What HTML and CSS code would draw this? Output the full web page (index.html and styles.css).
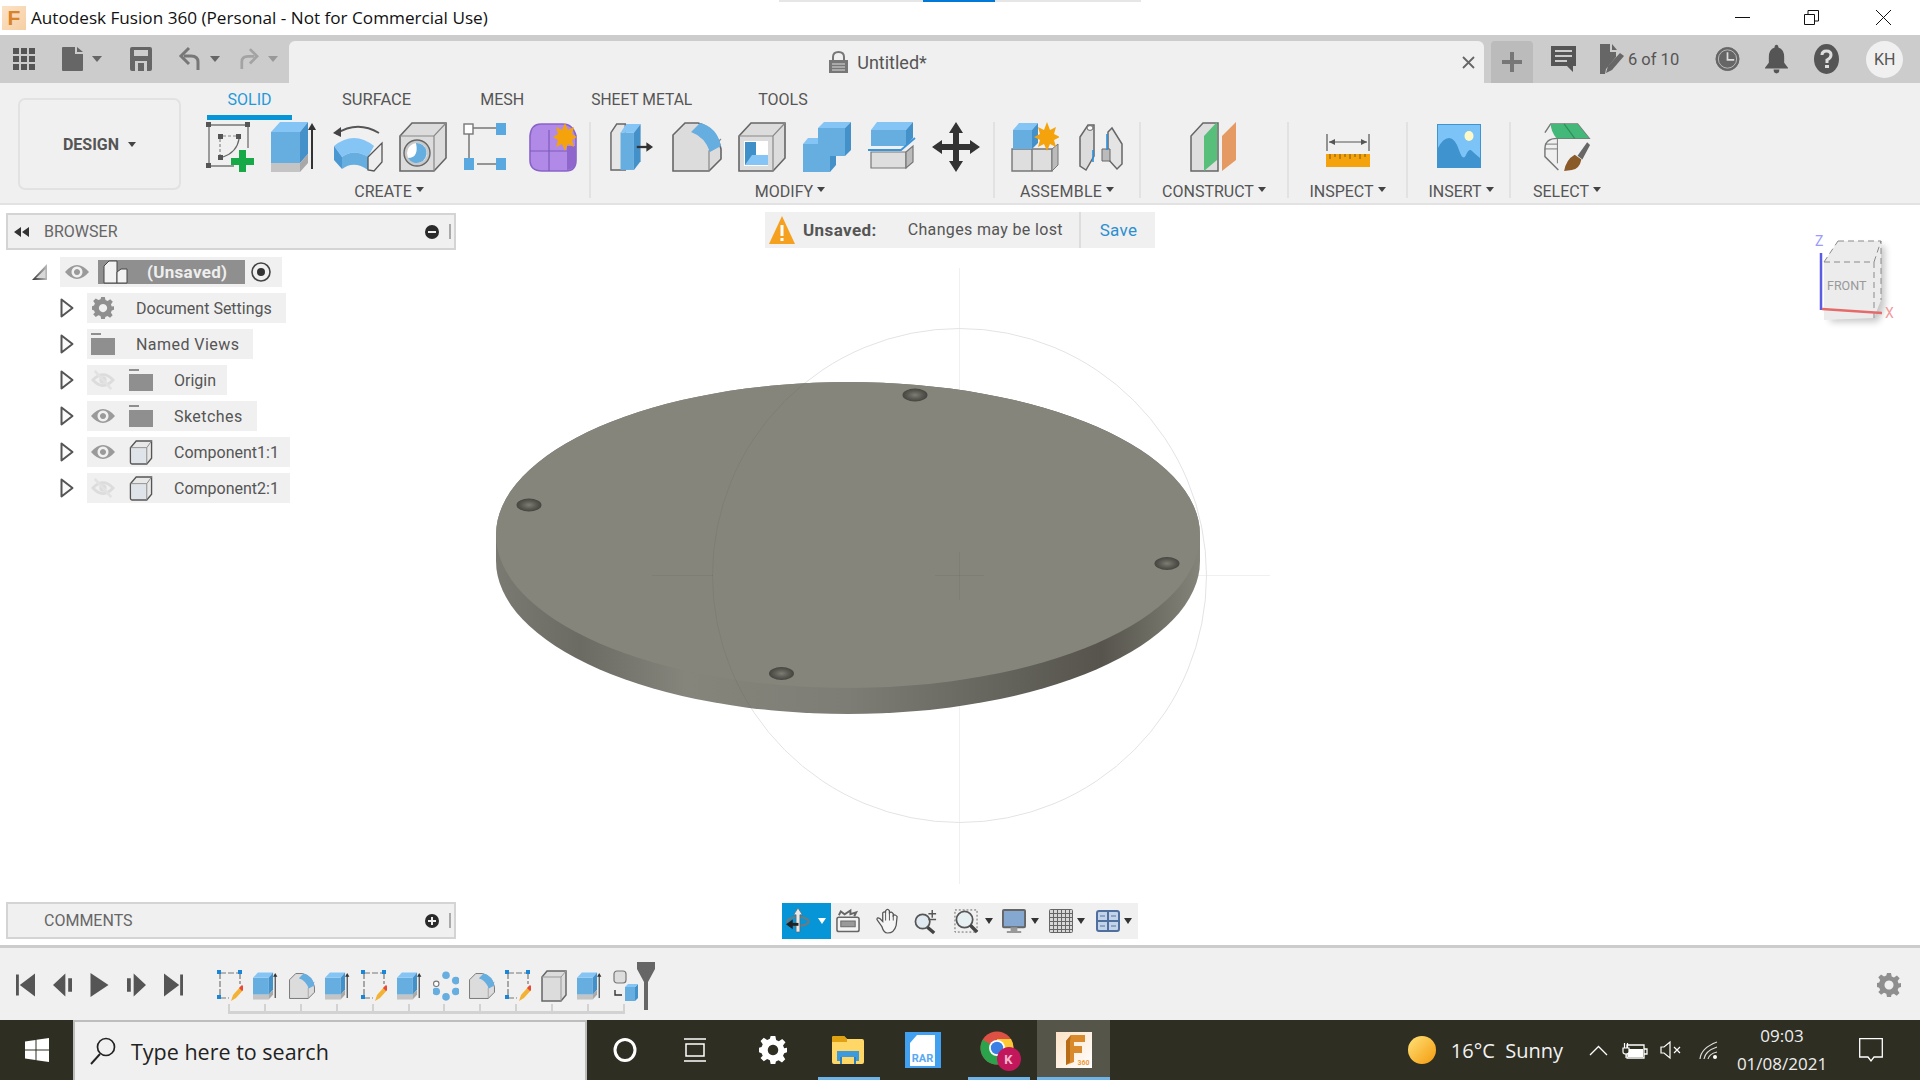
FILE: index.html
```html
<!DOCTYPE html>
<html lang="en">
<head>
<meta charset="utf-8">
<title>Autodesk Fusion 360</title>
<link rel="stylesheet" href="styles.css">
</head>
<body>
<svg class="defs" width="0" height="0" aria-hidden="true">
  <defs>
    <symbol id="i-sketch" viewBox="0 0 48 50">
      <path d="M3 3H42M3 3V44M3 44H28M42 3V26" fill="none" stroke="#777" stroke-width="1.4"/>
      <path d="M0 0h5v5H0zM39 0h5v5h-5zM0 41h5v5H0zM12 12h5v5h-5zM30 12h5v5h-5zM12 33h5v5h-5z" fill="#555"/>
      <path d="M14 17V33M17 14H30" fill="none" stroke="#888" stroke-width="1.2" stroke-dasharray="3 2"/>
      <path d="M33 17Q31 30 17 35" fill="none" stroke="#666" stroke-width="1.3"/>
      <path d="M33 28h7v8h8v7h-8v7h-7v-7h-8v-7h8z" fill="#17a847"/>
    </symbol>
    <symbol id="i-sketch-edit" viewBox="0 0 26 32">
      <path d="M3 3H23M3 3V28M3 28H12M23 3V14" fill="none" stroke="#777" stroke-width="1.2" stroke-dasharray="6 2"/>
      <path d="M0 0h4v4H0zM21 0h4v4h-4zM0 25h4v4H0z" fill="#1c86d6"/>
      <path d="M14 31l2-6 8-9 3 3-8 9z" fill="#f2b233"/>
      <path d="M22 18l3-3 3 3-3 3z" fill="#e8473c"/>
    </symbol>
    <symbol id="i-extrude" viewBox="0 0 48 50">
      <path d="M0 10H29V41H0z" fill="#66ade0"/>
      <path d="M0 10L9 0H37L29 10z" fill="#85c5f5"/>
      <path d="M29 10L37 0V32L29 41z" fill="#4490c8"/>
      <path d="M0 41H29V50H0z" fill="#c4c4c4"/>
      <path d="M29 41L37 32V41L29 50z" fill="#a8a8a8"/>
      <path d="M41 47V6" stroke="#333" stroke-width="2"/>
      <path d="M41 1L37 8H45z" fill="#333"/>
    </symbol>
    <symbol id="i-revolve" viewBox="0 0 50 50">
      <path d="M3 12Q24 -2 46 11" fill="none" stroke="#555" stroke-width="1.8"/>
      <path d="M0 11L8 5L8 15z" fill="#444"/>
      <path d="M1 24Q21 8 41 24L35 35Q21 26 9 35z" fill="#85c5f5"/>
      <path d="M1 24L9 35V47L1 38z" fill="#4a97d2"/>
      <path d="M9 35Q21 26 35 35V48Q21 38 9 47z" fill="#66ade0"/>
      <path d="M35 35L49 21V40L41 49L35 48z" fill="#eee" stroke="#555" stroke-width="1.3"/>
    </symbol>
    <symbol id="i-hole" viewBox="0 0 48 50">
      <path d="M1 14L13 1H47V36L35 49H1z" fill="#dcdcdc" stroke="#666" stroke-width="1.6"/>
      <path d="M1 14H35L47 1M35 14V49" fill="none" stroke="#888" stroke-width="1.2"/>
      <circle cx="18" cy="31" r="13" fill="#c9c9c9" stroke="#666" stroke-width="1.4"/>
      <circle cx="18" cy="31" r="10" fill="#fff"/>
      <path d="M17 21A10 10 0 1 1 9 36Q20 36 17 21z" fill="#66ade0"/>
    </symbol>
    <symbol id="i-pattern" viewBox="0 0 44 50">
      <path d="M9 6H34M6 12V36M14 42H34" stroke="#777" stroke-width="1.5"/>
      <rect x="1" y="2" width="9" height="10" fill="#fff" stroke="#777" stroke-width="1.4"/>
      <rect x="33" y="1" width="10" height="12" fill="#5aa8e0"/>
      <rect x="1" y="36" width="10" height="12" fill="#5aa8e0"/>
      <rect x="33" y="36" width="10" height="12" fill="#5aa8e0"/>
    </symbol>
    <symbol id="i-form" viewBox="0 0 48 50">
      <path d="M12 2H34Q44 2 47 14V38Q47 49 37 49H13Q1 49 1 38V14Q2 2 12 2z" fill="#b18ae8" stroke="#8a63c9" stroke-width="1.6"/>
      <path d="M1 29H40M20 8V49" stroke="#7e5bb8" stroke-width="1.2" fill="none"/>
      <path d="M38 24H47V38Q47 47 38 48z" fill="#8e66cc"/>
      <path d="M36 0l3 7 6-3-2 7 5 3-5 3 2 7-6-3-3 7-3-7-6 3 2-7-5-3 5-3-2-7 6 3z" fill="#f5a30c" transform="translate(0 1)"/>
    </symbol>
    <symbol id="i-press" viewBox="0 0 46 50">
      <path d="M1 49V10L7 1H16V49z" fill="#e6e6e6" stroke="#666" stroke-width="1.5"/>
      <path d="M11 10H25V49H11z" fill="#66ade0"/>
      <path d="M11 10L17 1H32L25 10z" fill="#85c5f5"/>
      <path d="M25 10L32 1V40L25 49z" fill="#4490c8"/>
      <path d="M28 25H40" stroke="#333" stroke-width="2.4"/>
      <path d="M38 20L45 25L38 30z" fill="#333"/>
    </symbol>
    <symbol id="i-fillet" viewBox="0 0 50 50">
      <path d="M1 49V13L13 1H26Q44 6 49 27V37L37 49z" fill="#dcdcdc" stroke="#666" stroke-width="1.6"/>
      <path d="M37 49V29L49 17" fill="none" stroke="#888" stroke-width="1.2"/>
      <path d="M19 10L28 1Q45 5 49 24L38 30Q33 15 19 10z" fill="#66ade0"/>
    </symbol>
    <symbol id="i-shell" viewBox="0 0 48 50">
      <path d="M1 14L13 1H47V36L35 49H1z" fill="#dcdcdc" stroke="#666" stroke-width="1.6"/>
      <path d="M1 14H35L47 1M35 14V49" fill="none" stroke="#888" stroke-width="1.2"/>
      <rect x="6" y="19" width="24" height="25" fill="#fff"/>
      <path d="M7 20H18V33H30V43H7z" fill="#85c5f5"/>
      <path d="M7 20H18V33H14L7 43z" fill="#3f8fc9"/>
    </symbol>
    <symbol id="i-combine" viewBox="0 0 48 50">
      <path d="M15 6L21 0H48L42 6z" fill="#85c5f5"/>
      <path d="M15 6H42V34H15z" fill="#66ade0"/>
      <path d="M42 6L48 0V28L42 34z" fill="#4490c8"/>
      <path d="M0 22H27V50H0z" fill="#66ade0"/>
      <path d="M0 22L5 16H15V22z" fill="#85c5f5"/>
      <path d="M27 34H33V43L27 50z" fill="#4490c8"/>
    </symbol>
    <symbol id="i-offset" viewBox="0 0 48 50">
      <path d="M3 8L9 0H45L38 8z" fill="#85c5f5"/>
      <path d="M3 8H38V24H3z" fill="#66ade0"/>
      <path d="M38 8L45 0V16L38 24z" fill="#4490c8"/>
      <path d="M0 28H33L47 16" fill="none" stroke="#3a94dc" stroke-width="1.800"/>
      <path d="M3 30H38V46H3z" fill="#dedede" stroke="#777" stroke-width="1.200"/>
      <path d="M38 30L45 24V40L38 46z" fill="#bbb" stroke="#777" stroke-width="1.200"/>
    </symbol>
    <symbol id="i-move" viewBox="0 0 48 50">
      <path d="M24 0L31 11H27V22H38V18L48 25L38 32V28H27V39H31L24 50L17 39H21V28H10V32L0 25L10 18V22H21V11H17z" fill="#333"/>
    </symbol>
    <symbol id="i-assemble" viewBox="0 0 48 50">
      <path d="M1 27H21V49H1zM21 27H41V49H21z" fill="#dedede" stroke="#777" stroke-width="1.4"/>
      <path d="M41 27L47 22V43L41 49z" fill="#bbb" stroke="#777" stroke-width="1"/>
      <path d="M2 8H21V27H2z" fill="#66ade0"/>
      <path d="M2 8L8 1H27L21 8z" fill="#85c5f5"/>
      <path d="M21 8L27 1V21L21 27z" fill="#4490c8"/>
      <path d="M36 0l3 8 6-3-2 7 6 3-6 3 2 7-6-3-3 7-3-7-6 3 2-7-6-3 6-3-2-7 6 3z" fill="#f5a30c"/>
    </symbol>
    <symbol id="i-joint" viewBox="0 0 44 46">
      <path d="M1 42V13L9 1H15V32L7 46z" fill="#dcdcdc" stroke="#666" stroke-width="1.5"/>
      <ellipse cx="11" cy="4" rx="3" ry="2.4" fill="#fff" stroke="#666"/>
      <path d="M29 24V8L33 4L43 20V40L38 45L29 35z" fill="#e4e4e4" stroke="#666" stroke-width="1.5"/>
      <path d="M23 25H31V37H23z" fill="#bbb" stroke="#666"/>
      <path d="M14 26V38M28 10V26" stroke="#2d8fdc" stroke-width="1.6"/>
    </symbol>
    <symbol id="i-construct" viewBox="0 0 48 50">
      <path d="M1 49V14L13 1H28V49z" fill="#dedede" stroke="#666" stroke-width="1.5"/>
      <path d="M14 49V14L27 0V38L14 49z" fill="#58bf7a"/>
      <path d="M32 49V14L46 0V38L32 49z" fill="#e59a63"/>
    </symbol>
    <symbol id="i-inspect" viewBox="0 0 44 34">
      <path d="M1 1V18M43 1V18M3 9H41" stroke="#555" stroke-width="1.2" fill="none"/>
      <path d="M3 9L9 6V12zM41 9L35 6V12z" fill="#555"/>
      <rect y="21" width="44" height="13" fill="#f5a30c"/>
      <path d="M4 21v5M9 21v3M14 21v5M19 21v3M24 21v5M29 21v3M34 21v5M39 21v3" stroke="#7a5a10" stroke-width="1"/>
    </symbol>
    <symbol id="i-insert" viewBox="0 0 44 44">
      <rect x=".5" y=".5" width="43" height="43" fill="#7cc4f8" stroke="#3f93cf"/>
      <ellipse cx="32" cy="12" rx="4.5" ry="5" fill="#fff9c8"/>
      <path d="M1 43V24Q6 14 12 14T22 26T29 31T35 27T43 34V43z" fill="#3f93cf"/>
    </symbol>
    <symbol id="i-select" viewBox="0 0 50 50">
      <path d="M2 10L8 1H36L48 16H15Q2 16 2 27V35L16 49" fill="none" stroke="#777" stroke-width="1.5"/>
      <path d="M8 1H36L48 16H14Q8 8 8 1z" fill="#44b878"/>
      <path d="M22 1L33 16" stroke="#2f8f58" stroke-width="1.2"/>
      <path d="M15 16V42M2 27H15M2 22H15" stroke="#777" stroke-width="1" fill="none"/>
      <path d="M36 34L46 20L49 23L41 38z" fill="#666"/>
      <path d="M22 50Q24 38 33 33L40 38Q38 48 30 49z" fill="#8a5a28"/>
    </symbol>
    <symbol id="i-gear" viewBox="0 0 24 24">
      <path fill-rule="evenodd" d="M10 0h4l.7 3.4 2.3 1 2.9-1.9 2.8 2.8L20.600 8.100l1 2.300L24 10v4l-2.400.7-1 2.300 1.900 2.900-2.800 2.800-2.900-1.900-2.300 1L14 24h-4l-.7-3.200-2.300-1-2.900 1.900-2.800-2.800L3.200 17l-1-2.300L0 14v-4l2.200-.6 1-2.300L1.300 4.300 4.100 1.500 7 3.400l2.300-1zM12 7.500a4.500 4.500 0 1 0 .001 0z"/>
    </symbol>
    <symbol id="i-folder" viewBox="0 0 24 22">
      <path d="M0 0H10V2H0zM0 5H24V22H0z" fill="#8f8f8f"/>
    </symbol>
    <symbol id="i-eye" viewBox="0 0 24 18">
      <path fill-rule="evenodd" d="M0 9Q12 -5 24 9Q12 23 0 9zM12 3.500a5.500 5.500 0 1 0 .001 0zM12 6a3 3 0 1 1-.001 0z" fill="#9a9a9a"/>
    </symbol>
    <symbol id="i-eye-off" viewBox="0 0 24 24">
      <path d="M1 12Q12 0 23 12Q12 24 1 12z" fill="none" stroke="#dcdcdc" stroke-width="3"/>
      <circle cx="12" cy="12" r="4" fill="#dcdcdc"/>
      <path d="M3 2L21 22" stroke="#e2e2e2" stroke-width="3"/>
    </symbol>
    <symbol id="i-comp" viewBox="0 0 24 26">
      <path d="M1 8L7 1H23V19L18 25H3Q1 25 1 23z" fill="#e8e8e8" stroke="#555" stroke-width="1.4"/>
      <path d="M1 8H18L23 1M18 8V25" fill="none" stroke="#888"/>
      <path d="M2 9H17V24H3z" fill="#dfe4ea"/>
    </symbol>
    <symbol id="i-twist" viewBox="0 0 14 20">
      <path d="M1.500 1.500L12.500 10L1.500 18.500z" fill="#fafafa" stroke="#555" stroke-width="2" stroke-linejoin="round"/>
    </symbol>
    <symbol id="i-tlpattern" viewBox="0 0 24 26">
      <circle cx="3" cy="11" r="2.500" fill="#fff" stroke="#777"/>
      <circle cx="12" cy="3" r="3.500" fill="#66ade0"/>
      <circle cx="21" cy="8" r="3.500" fill="#66ade0"/>
      <circle cx="21" cy="18" r="3.500" fill="#66ade0"/>
      <circle cx="12" cy="23" r="3.500" fill="#66ade0"/>
      <circle cx="3" cy="18" r="3.500" fill="#66ade0"/>
    </symbol>
    <symbol id="i-tlbox" viewBox="0 0 26 32">
      <path d="M1 7L6 1H25V25L20 31H1z" fill="#dcdcdc" stroke="#666" stroke-width="1.5"/>
      <path d="M1 7H20L25 1M20 7V31" fill="none" stroke="#999"/>
    </symbol>
    <symbol id="i-tlmove" viewBox="0 0 26 32">
      <rect x="1" y="1" width="12" height="12" rx="3" fill="#ddd" stroke="#777" stroke-width="1.2"/>
      <path d="M2 20V25H9" fill="none" stroke="#333" stroke-width="1.4"/>
      <path d="M12 17H22V31H12z" fill="#66ade0"/>
      <path d="M22 17L25 14V28L22 31z" fill="#4490c8"/>
      <path d="M12 17L15 14H25L22 17z" fill="#85c5f5"/>
    </symbol>
  </defs>
</svg>

<header class="titlebar">
  <span class="app-logo"><span class="app-logo-f">F</span></span>
  <span class="app-title">Autodesk Fusion 360 (Personal - Not for Commercial Use)</span>
  <span class="winbtns">
    <svg class="winbtn" viewBox="0 0 15 15"><path d="M0 7.500H15" stroke="#111" stroke-width="1"/></svg>
    <svg class="winbtn" viewBox="0 0 15 15"><path d="M.5 4.500H10.500V14.500H.5zM4 4.500V.5H14.500V11H10.500" fill="none" stroke="#111"/></svg>
    <svg class="winbtn winbtn-close" viewBox="0 0 15 15"><path d="M0 0L15 15M15 0L0 15" stroke="#111"/></svg>
  </span>
</header>
<div class="progress"><span class="progress-fill"></span></div>

<div class="tabbar">
  <div class="qat">
    <svg class="q-waffle" viewBox="0 0 22 22"><path fill="#555" d="M0 0h6v6H0zM8 0h6v6H8zM16 0h6v6h-6zM0 8h6v6H0zM8 8h6v6H8zM16 8h6v6h-6zM0 16h6v6H0zM8 16h6v6H8zM16 16h6v6h-6z"/></svg>
    <svg class="q-file" viewBox="0 0 21 24"><path fill="#666" d="M0 1Q0 0 1 0H13V7H21V23Q21 24 20 24H1Q0 24 0 23zM15 0L21 5H15z"/></svg>
    <span class="caret caret-file"></span>
    <svg class="q-save" viewBox="0 0 22 24"><path fill-rule="evenodd" fill="#666" d="M0 2Q0 0 2 0H20Q22 0 22 2V22Q22 24 20 24H2Q0 24 0 22zM4 3V9H18V3zM5 24H17V14H5zM8 16H14V24H8z"/></svg>
    <svg class="q-undo" viewBox="0 0 20 24"><path d="M18 23V15Q18 9 11 9H4" fill="none" stroke="#777" stroke-width="3"/><path d="M9 1L1 9L9 17" fill="none" stroke="#777" stroke-width="3"/></svg>
    <span class="caret caret-undo"></span>
    <svg class="q-redo" viewBox="0 0 20 24"><path d="M2 23V15Q2 9 9 9H16" fill="none" stroke="#a3a3a3" stroke-width="3"/><path d="M11 1L19 9L11 17" fill="none" stroke="#a3a3a3" stroke-width="3"/></svg>
    <span class="caret caret-redo"></span>
  </div>
  <div class="doctab">
    <div class="doctab-title">
      <svg class="lock" viewBox="0 0 19 22"><path d="M4 9V6Q4 1 9.500 1T15 6V9" fill="none" stroke="#777" stroke-width="2"/><path fill="#777" d="M0 9H19V22H0z"/><path d="M3 13H16M3 16H16M3 19H16" stroke="#ddd"/></svg>
      <span class="doctab-name">Untitled*</span>
    </div>
    <svg class="doctab-x" viewBox="0 0 13 13"><path d="M1 1L12 12M12 1L1 12" stroke="#666" stroke-width="1.8"/></svg>
  </div>
  <div class="newtab"><svg class="newtab-plus" viewBox="0 0 20 20"><path d="M10 0V20M0 10H20" stroke="#777" stroke-width="4"/></svg></div>
  <div class="qat-right">
    <svg class="q-comment" viewBox="0 0 25 26"><path fill="#555" d="M0 0H25V20H22V26L16 20H0z"/><path d="M4 5H21M4 10H21M4 15H16" stroke="#ccc" stroke-width="1.8"/></svg>
    <svg class="q-doc" viewBox="0 0 24 30"><path fill="#666" d="M0 0H10V8H16V13L6 25L5 30H0zM12 0L17 6H12z"/><path d="M6 29L8 22L20 9L24 12L12 26z" fill="#666"/></svg>
    <span class="doc-count">6 of 10</span>
    <svg class="q-clock" viewBox="0 0 26 26"><circle cx="13" cy="13" r="12" fill="#666" stroke="#666"/><circle cx="13" cy="13" r="9.500" fill="#666" stroke="#bbb"/><path d="M13 6V14H20" fill="none" stroke="#ddd" stroke-width="1.800"/></svg>
    <svg class="q-bell" viewBox="0 0 24 30"><path fill="#555" d="M12 0Q14 0 14 3Q20 5 20 13V19L24 24V25H0V24L4 19V13Q4 5 10 3Q10 0 12 0z"/><path fill="#555" d="M9 26H15Q15 30 12 30T9 26z"/></svg>
    <svg class="q-help" viewBox="0 0 25 30"><ellipse cx="12.500" cy="15" rx="12.500" ry="15" fill="#555"/><path d="M8 11Q8 7 12.500 7T17 11Q17 14 13 16V19" fill="none" stroke="#ddd" stroke-width="3"/><path d="M11 21h4v3h-4z" fill="#ddd"/></svg>
    <span class="avatar">KH</span>
  </div>
</div>

<section class="ribbon">
  <div class="workspace"><span class="workspace-name">DESIGN</span><span class="caret caret-ws"></span></div>
  <div class="rib-main">
    <nav class="rib-tabs">
      <span class="rib-tab rib-tab-solid">SOLID</span>
      <span class="rib-tab rib-tab-surface">SURFACE</span>
      <span class="rib-tab rib-tab-mesh">MESH</span>
      <span class="rib-tab rib-tab-sheet">SHEET METAL</span>
      <span class="rib-tab rib-tab-tools">TOOLS</span>
    </nav>
    <div class="rib-groups">
      <div class="group g-create">
        <div class="g-icons">
          <span class="cell"><svg class="ic"><use href="#i-sketch"/></svg></span>
          <span class="cell"><svg class="ic"><use href="#i-extrude"/></svg></span>
          <span class="cell"><svg class="ic ic-w nudge-4"><use href="#i-revolve"/></svg></span>
          <span class="cell"><svg class="ic nudge-4"><use href="#i-hole"/></svg></span>
          <span class="cell"><svg class="ic ic-n nudge-8"><use href="#i-pattern"/></svg></span>
          <span class="cell"><svg class="ic nudge-4"><use href="#i-form"/></svg></span>
        </div>
        <div class="g-label g-label-create">CREATE<span class="caret caret-lbl"></span></div>
      </div>
      <div class="group g-modify">
        <div class="g-icons">
          <span class="cell"><svg class="ic ic-n"><use href="#i-press"/></svg></span>
          <span class="cell"><svg class="ic ic-w"><use href="#i-fillet"/></svg></span>
          <span class="cell"><svg class="ic"><use href="#i-shell"/></svg></span>
          <span class="cell"><svg class="ic"><use href="#i-combine"/></svg></span>
          <span class="cell"><svg class="ic"><use href="#i-offset"/></svg></span>
          <span class="cell"><svg class="ic nudge-2"><use href="#i-move"/></svg></span>
        </div>
        <div class="g-label g-label-modify">MODIFY<span class="caret caret-lbl"></span></div>
      </div>
      <div class="group g-assemble">
        <div class="g-icons">
          <span class="cell"><svg class="ic nudge-2"><use href="#i-assemble"/></svg></span>
          <span class="cell"><svg class="ic ic-n"><use href="#i-joint"/></svg></span>
        </div>
        <div class="g-label g-label-assemble">ASSEMBLE<span class="caret caret-lbl"></span></div>
      </div>
      <div class="group g-construct">
        <div class="g-icons g-icons-center"><svg class="ic"><use href="#i-construct"/></svg></div>
        <div class="g-label">CONSTRUCT<span class="caret caret-lbl"></span></div>
      </div>
      <div class="group g-inspect">
        <div class="g-icons g-icons-center"><svg class="ic-ruler"><use href="#i-inspect"/></svg></div>
        <div class="g-label">INSPECT<span class="caret caret-lbl"></span></div>
      </div>
      <div class="group g-insert">
        <div class="g-icons g-icons-center"><svg class="ic-picture"><use href="#i-insert"/></svg></div>
        <div class="g-label g-label-insert">INSERT<span class="caret caret-lbl"></span></div>
      </div>
      <div class="group g-select">
        <div class="g-icons g-icons-center"><svg class="ic"><use href="#i-select"/></svg></div>
        <div class="g-label">SELECT<span class="caret caret-lbl"></span></div>
      </div>
    </div>
  </div>
</section>

<main class="canvas">
  <svg class="scene" viewBox="0 205 1920 740" width="1920" height="740">
    <defs>
      <linearGradient id="side" x1="0" x2="1" y1="0" y2="0">
        <stop offset="0" stop-color="#7a7a72"/>
        <stop offset=".12" stop-color="#6b6b64"/>
        <stop offset=".27" stop-color="#85857c"/>
        <stop offset=".5" stop-color="#7d7d75"/>
        <stop offset=".72" stop-color="#64635c"/>
        <stop offset=".86" stop-color="#56544c"/>
        <stop offset="1" stop-color="#84847a"/>
      </linearGradient>
      <radialGradient id="holeg" cx=".5" cy=".5" r=".5">
        <stop offset="0" stop-color="#7d7d75"/>
        <stop offset=".55" stop-color="#5c5c55"/>
        <stop offset="1" stop-color="#45453f"/>
      </radialGradient>
      <filter id="soft" x="-30%" y="-30%" width="160%" height="160%"><feGaussianBlur stdDeviation="3.500"/></filter>
    </defs>
    <g fill="none" stroke="#f0f0f0" stroke-width="1">
      <ellipse cx="959.500" cy="575.500" rx="247" ry="247"/>
      <path d="M959.500 268V884M652 575.500H1270"/>
    </g>
    <path d="M496 535A352 153 0 0 1 1200 535V561A352 153 0 0 1 496 561z" fill="url(#side)"/>
    <ellipse cx="848" cy="535" rx="352" ry="153" fill="#85857c"/>
    <g fill="url(#holeg)">
      <ellipse cx="915" cy="395" rx="12.500" ry="6.500"/>
      <ellipse cx="529" cy="505" rx="12.500" ry="6.500"/>
      <ellipse cx="1167" cy="563.500" rx="12.500" ry="6.500"/>
      <ellipse cx="781.500" cy="673.500" rx="12.500" ry="6.500"/>
    </g>
    <g fill="none" stroke="#000" stroke-opacity=".05" stroke-width="1">
      <ellipse cx="959.500" cy="575.500" rx="247" ry="247"/>
      <path d="M652 575.500H713M935 575.500H984M959.500 552V600"/>
    </g>
    <g class="cube">
      <path d="M1826 319L1826 270L1840 243H1881V303L1874 319z" fill="#000" opacity=".22" filter="url(#soft)" transform="translate(4 3)"/>
      <path d="M1824 320V262L1838 241H1881V300L1874 318z" fill="#ececec"/>
      <path d="M1824 262H1874L1881 241M1874 262V318" fill="none" stroke="#8a8a8a" stroke-dasharray="6 4"/>
      <path d="M1838 241H1881V300M1824 262L1838 241" fill="none" stroke="#8a8a8a" stroke-dasharray="6 4"/>
      <path d="M1821 253V310" stroke="#5b5be6" stroke-width="2.500"/>
      <path d="M1822 309L1882 313" stroke="#e56a6a" stroke-width="2.500"/>
      <text x="1827" y="290" class="cube-label">FRONT</text>
      <text x="1815" y="246" class="cube-z">Z</text>
      <text x="1885" y="318" class="cube-x">X</text>
    </g>
  </svg>

  <aside class="side">
    <div class="panel">
      <svg class="panel-back" viewBox="0 0 15 10"><path fill="#333" d="M7 0V10L0 5zM15 0V10L8 5z"/></svg>
      <span class="panel-title">BROWSER</span>
      <svg class="panel-btn" viewBox="0 0 14 14"><circle cx="7" cy="7" r="7" fill="#2a2a2a"/><path d="M3 7H11" stroke="#eee" stroke-width="2"/></svg>
      <span class="panel-grip"></span>
    </div>
    <ul class="tree">
      <li class="row row-root">
        <svg class="twist-open" viewBox="0 0 17 18"><defs><linearGradient id="tw" x1="0" x2="1" y1="0" y2="0"><stop offset="0" stop-color="#333"/><stop offset="1" stop-color="#bbb"/></linearGradient></defs><path d="M16 1V17H1z" fill="url(#tw)"/><path d="M14.500 6V15H5z" fill="#d8d8d8"/></svg>
        <div class="row-body row-body-root">
          <svg class="row-icon"><use href="#i-eye"/></svg>
          <div class="root-sel">
            <svg class="root-comp" viewBox="0 0 24 24"><path d="M1 23V6L6 1H14V23z" fill="#f2f2f2" stroke="#444"/><path d="M14 23V12L18 9H24V23z" fill="#f2f2f2" stroke="#444"/></svg>
            <span class="root-name">(Unsaved)</span>
          </div>
          <svg class="root-target" viewBox="0 0 20 20"><circle cx="10" cy="10" r="9" fill="none" stroke="#444" stroke-width="1.6"/><circle cx="10" cy="10" r="4" fill="#333"/></svg>
        </div>
      </li>
      <li class="row">
        <svg class="twist"><use href="#i-twist"/></svg>
        <div class="row-body">
          <svg class="row-icon gear-tree"><use href="#i-gear"/></svg>
          <span class="row-text">Document Settings</span>
        </div>
      </li>
      <li class="row">
        <svg class="twist"><use href="#i-twist"/></svg>
        <div class="row-body">
          <svg class="row-icon"><use href="#i-folder"/></svg>
          <span class="row-text row-text-wide">Named Views</span>
        </div>
      </li>
      <li class="row">
        <svg class="twist"><use href="#i-twist"/></svg>
        <div class="row-body row-body-two">
          <svg class="row-icon"><use href="#i-eye-off"/></svg>
          <svg class="row-icon"><use href="#i-folder"/></svg>
          <span class="row-text">Origin</span>
        </div>
      </li>
      <li class="row">
        <svg class="twist"><use href="#i-twist"/></svg>
        <div class="row-body">
          <svg class="row-icon"><use href="#i-eye"/></svg>
          <svg class="row-icon"><use href="#i-folder"/></svg>
          <span class="row-text row-text-wide">Sketches</span>
        </div>
      </li>
      <li class="row">
        <svg class="twist"><use href="#i-twist"/></svg>
        <div class="row-body row-body-two">
          <svg class="row-icon"><use href="#i-eye"/></svg>
          <svg class="row-icon row-comp"><use href="#i-comp"/></svg>
          <span class="row-text">Component1:1</span>
        </div>
      </li>
      <li class="row">
        <svg class="twist"><use href="#i-twist"/></svg>
        <div class="row-body row-body-two">
          <svg class="row-icon"><use href="#i-eye-off"/></svg>
          <svg class="row-icon row-comp"><use href="#i-comp"/></svg>
          <span class="row-text">Component2:1</span>
        </div>
      </li>
    </ul>
  </aside>

  <div class="unsaved">
    <svg class="warn" viewBox="0 0 26 28"><path d="M13 0L26 28H0z" fill="#f5a11f"/><path d="M11.500 9H14.500V20H11.500zM11.500 22H14.500V25H11.500z" fill="#fff"/></svg>
    <strong class="unsaved-key">Unsaved:</strong>
    <span class="unsaved-msg">Changes may be lost</span>
    <span class="unsaved-save">Save</span>
  </div>

  <div class="panel panel-comments">
    <span class="panel-title panel-title-comments">COMMENTS</span>
    <svg class="panel-btn" viewBox="0 0 14 14"><circle cx="7" cy="7" r="7" fill="#2a2a2a"/><path d="M3 7H11M7 3V11" stroke="#eee" stroke-width="2"/></svg>
    <span class="panel-grip"></span>
  </div>

  <div class="navbar">
    <div class="nav-orbit">
      <svg class="nav-ic" viewBox="0 0 25 27"><ellipse cx="12.500" cy="14" rx="11" ry="4.500" fill="none" stroke="#777" stroke-width="2"/><path d="M12.500 0L17 7H14.500V25H10.500V7H8z" fill="#e8e8e8" stroke="#666" stroke-width=".7"/><path d="M0 17L7 12V22z" fill="#222"/><path d="M5 15.500H13V18.500H5z" fill="#222"/></svg>
      <span class="caret caret-white"></span>
    </div>
    <svg class="nav-ic" viewBox="0 0 25 24"><path d="M3 6L5 2L9 5L15 1L15 5L21 3L19 7" fill="none" stroke="#666" stroke-width="2"/><rect x="1" y="8" width="23" height="15" rx="2" fill="#f3f3f3" stroke="#666" stroke-width="1.600"/><rect x="5" y="12" width="15" height="6" fill="#999" stroke="#666"/></svg>
    <svg class="nav-ic nav-hand" viewBox="0 0 25 27"><path d="M6 19L1 12Q1 9 4 11L7 14V5Q9 3 10 5V3Q12 0 14 3V5Q16 3 18 6V8Q20 6 22 9L21 18Q19 26 12 26Q8 26 6 19z" fill="#f5f5f5" stroke="#555" stroke-width="1.300"/><path d="M10 5V13M14 3V13M18 7V13" stroke="#555"/></svg>
    <svg class="nav-ic" viewBox="0 0 25 25"><circle cx="9" cy="13" r="7.500" fill="#dfe9ef" stroke="#555" stroke-width="1.800"/><path d="M14 19L21 25" stroke="#444" stroke-width="3.600"/><path d="M19 1V9M15 5H23M15 11H23" stroke="#555" stroke-width="1.500"/></svg>
    <div class="nav-item nav-zw">
      <svg class="nav-ic" viewBox="0 0 25 25"><path d="M1 1H24V24H1z" fill="none" stroke="#666" stroke-dasharray="2 2"/><circle cx="11" cy="11" r="8.500" fill="#e6eff2" stroke="#555" stroke-width="1.800"/><path d="M17 17L24 24" stroke="#444" stroke-width="3.600"/></svg>
      <span class="caret caret-nav"></span>
    </div>
    <div class="nav-item nav-disp">
      <svg class="nav-ic" viewBox="0 0 25 25"><rect x="1" y="1" width="23" height="18" rx="1" fill="#85a8d0" stroke="#666" stroke-width="2"/><path d="M9 19H16V23H20V25H5V23H9z" fill="#999"/></svg>
      <span class="caret caret-nav"></span>
    </div>
    <div class="nav-item nav-grid">
      <svg class="nav-ic" viewBox="0 0 24 24"><rect x=".5" y=".5" width="23" height="23" rx="1" fill="#d8d8d8" stroke="#666"/><path d="M4.500 0V24M8.500 0V24M12.500 0V24M16.500 0V24M20.500 0V24M0 4.500H24M0 8.500H24M0 12.500H24M0 16.500H24M0 20.500H24" stroke="#666"/></svg>
      <span class="caret caret-nav"></span>
    </div>
    <div class="nav-item nav-views">
      <svg class="nav-ic" viewBox="0 0 24 22"><rect x="1" y="1" width="22" height="20" rx="2" fill="#c3d3e8" stroke="#4f6f9f" stroke-width="2"/><path d="M12 1V21M1 11H23" stroke="#4f6f9f" stroke-width="2"/><path d="M4 5h5v2H4zM15 5h5v2h-5zM4 15h5v2H4zM15 15h5v2h-5z" fill="#8aa4c8"/></svg>
      <span class="caret caret-nav"></span>
    </div>
  </div>
</main>

<section class="timeline">
  <div class="tl-controls">
    <svg class="tl-ctl" viewBox="0 0 20 24"><path d="M0 1h3v22H0zM20 0V24L4 12z" fill="#555"/></svg>
    <svg class="tl-ctl" viewBox="0 0 20 24"><path d="M13 0V24L0 12zM16 5h4v14h-4z" fill="#555"/></svg>
    <svg class="tl-ctl" viewBox="0 0 18 24"><path d="M0 0L18 12L0 24z" fill="#555"/></svg>
    <svg class="tl-ctl" viewBox="0 0 20 24"><path d="M7 0V24L20 12zM0 5h4v14H0z" fill="#555"/></svg>
    <svg class="tl-ctl" viewBox="0 0 20 24"><path d="M0 0V24L16 12zM17 1h3v22h-3z" fill="#555"/></svg>
  </div>
  <div class="tl-track">
    <div class="tl-items">
      <svg class="tl-i"><use href="#i-sketch-edit"/></svg>
      <svg class="tl-i"><use href="#i-extrude"/></svg>
      <svg class="tl-i"><use href="#i-fillet"/></svg>
      <svg class="tl-i"><use href="#i-extrude"/></svg>
      <svg class="tl-i"><use href="#i-sketch-edit"/></svg>
      <svg class="tl-i"><use href="#i-extrude"/></svg>
      <svg class="tl-i"><use href="#i-tlpattern"/></svg>
      <svg class="tl-i"><use href="#i-fillet"/></svg>
      <svg class="tl-i"><use href="#i-sketch-edit"/></svg>
      <svg class="tl-i"><use href="#i-tlbox"/></svg>
      <svg class="tl-i"><use href="#i-extrude"/></svg>
      <svg class="tl-i"><use href="#i-tlmove"/></svg>
    </div>
    <div class="tl-ruler">
      <i></i><i></i><i></i><i></i><i></i><i></i><i></i><i></i><i></i><i></i><i></i>
    </div>
  </div>
  <svg class="tl-marker" viewBox="0 0 18 48"><path d="M0 0H18V7L11 20V48H7V20L0 7z" fill="#666"/></svg>
  <svg class="tl-gear"><use href="#i-gear"/></svg>
</section>

<footer class="taskbar">
  <div class="start">
    <svg class="win" viewBox="0 0 24 24"><path fill="#fff" d="M0 3.500L10.500 2V11.500H0zM11.500 1.800L24 0V11.500H11.500zM0 12.500H10.500V22L0 20.500zM11.500 12.500H24V24L11.500 22.200z"/></svg>
  </div>
  <div class="search">
    <svg class="search-ic" viewBox="0 0 26 28"><circle cx="16" cy="10" r="8.500" fill="none" stroke="#222" stroke-width="1.700"/><path d="M10 17L1 27" stroke="#222" stroke-width="1.900"/></svg>
    <span class="search-text">Type here to search</span>
  </div>
  <div class="tb-cell"><svg class="tb-cortana" viewBox="0 0 24 24"><ellipse cx="12" cy="12" rx="10" ry="10.500" fill="none" stroke="#fff" stroke-width="3"/></svg></div>
  <div class="tb-cell"><svg class="tb-view" viewBox="0 0 22 24"><path d="M0 1H22M0 23H22M2 6H20V18H2z" fill="none" stroke="#fff" stroke-width="1.500"/></svg></div>
  <div class="tb-cell"><svg class="tb-gear"><use href="#i-gear"/></svg></div>
  <div class="tb-cell tb-open">
    <svg class="tb-app" viewBox="0 0 32 28"><path d="M0 2Q0 0 2 0H12L15 3H30Q32 3 32 5V26Q32 28 30 28H2Q0 28 0 26z" fill="#ffd766"/><path d="M0 2Q0 0 2 0H12L15 3V6H0z" fill="#e0a212"/><path d="M5 15H27V25H24V21H8V25H5z" fill="#3d9bdd"/><path d="M8 21H24V28H8z" fill="#2d7fbd"/><path d="M10 21H22V28H10z" fill="#ffd766"/></svg>
  </div>
  <div class="tb-cell">
    <div class="tb-rar"><svg class="tb-rar-card" viewBox="0 0 25 31"><path d="M7 0H25V31H0V8z" fill="#fff"/></svg><span class="tb-rar-text">RAR</span></div>
  </div>
  <div class="tb-cell tb-open">
    <div class="tb-chrome">
      <svg class="tb-chrome-ic" viewBox="0 0 34 34"><circle cx="17" cy="17" r="16.500" fill="#dd5144"/><path d="M17 17L2.700 8.800A16.500 16.500 0 0 0 17 33.500z" fill="#2ba24c"/><path d="M17 17L33.500 17A16.500 16.500 0 0 0 31 8L17 8z" fill="#fcc934"/><path d="M17 17L33.500 17A16.500 16.500 0 0 1 17 33.500z" fill="#2ba24c"/><circle cx="17" cy="17" r="8" fill="#fff"/><circle cx="17" cy="17" r="6.200" fill="#3b7fe4"/></svg>
      <span class="tb-badge">K</span>
    </div>
  </div>
  <div class="tb-cell tb-open tb-active">
    <div class="tb-fusion"><svg class="tb-fusion-ic" viewBox="0 0 22 30"><path d="M3 30V6L8 0H22V7H11V11H19V18H11V27z" fill="#d98a2c"/><path d="M8 0L3 6V30L7 27V6z" fill="#b86c16"/></svg><span class="tb-fusion-num">360</span></div>
  </div>
  <div class="tray">
    <span class="sun"></span>
    <span class="weather">16°C&nbsp; Sunny</span>
    <svg class="tray-up" viewBox="0 0 19 11"><path d="M1 10L9.500 1.500L18 10" fill="none" stroke="#fff" stroke-width="1.300"/></svg>
    <svg class="tray-batt" viewBox="0 0 24 18"><path d="M4 4H21V17H4zM21 8H24V13H21z" fill="none" stroke="#fff" stroke-width="1.300"/><path d="M5 8H20V16H5z" fill="#fff"/><path d="M0 7H6V11Q6 13 3 13T0 11zM1.500 2V7M4.500 2V7M3 13V17" fill="#2e2e22" stroke="#fff" stroke-width="1.200"/></svg>
    <svg class="tray-vol" viewBox="0 0 21 18"><path d="M1 6H4L10 1V17L4 12H1z" fill="none" stroke="#fff" stroke-width="1.200"/><path d="M14 6L20 12M20 6L14 12" stroke="#fff" stroke-width="1.200"/></svg>
    <svg class="tray-wifi" viewBox="0 0 18 18"><path d="M1 18Q2 7 18 1M5 18Q6 10 18 6M9 18Q10 13 18 11" fill="none" stroke="#ddd" stroke-width="1.200"/><circle cx="16" cy="16" r="2" fill="#fff"/></svg>
    <div class="clock"><span>09:03</span><span>01/08/2021</span></div>
    <svg class="tray-note" viewBox="0 0 24 24"><path d="M.7.7H23.300V19H15L12 23L9 19H.7z" fill="none" stroke="#fff" stroke-width="1.300"/></svg>
  </div>
</footer>
</body>
</html>
```
FILE: styles.css
```css
* { box-sizing: border-box; }
html, body { margin: 0; padding: 0; }
body {
  width: 1920px;
  height: 1080px;
  overflow: hidden;
  display: flex;
  flex-direction: column;
  position: relative;
  background: #fff;
  font-family: Roboto, "Liberation Sans", sans-serif;
  color: #555;
}
svg { display: block; flex: none; overflow: visible; }
.defs { position: absolute; }

/* title bar */
.titlebar { height: 35px; display: flex; align-items: center; background: #fff; flex: none; }
.app-logo {
  width: 24px; height: 24px; margin-left: 2px;
  background: linear-gradient(135deg, #fbe2c6, #f6cfa3);
  display: flex; align-items: center; justify-content: center;
}
.app-logo-f { font: 700 21px "Liberation Sans", sans-serif; color: #d9832a; }
.app-title { margin-left: 5px; font: 17.150px "Open Sans", sans-serif; color: #111; white-space: nowrap; }
.winbtns { margin-left: auto; display: flex; padding-right: 29px; gap: 54px; align-items: center; }
.winbtn { width: 15px; height: 15px; }
.winbtn-close { margin-left: 3px; }
.progress {
  position: absolute; left: 779px; top: 0; width: 362px; height: 2px;
  background: #e6e6e6; display: flex;
}
.progress-fill { margin-left: 144px; width: 72px; background: #0078d7; }

/* carets */
.caret { display: block; flex: none; width: 0; height: 0; border-style: solid; border-color: #666 transparent transparent; border-width: 6px 5px 0; }

/* tab bar */
.tabbar { height: 48px; background: #ccc; display: flex; flex: none; }
.qat { width: 289px; flex: none; display: flex; align-items: center; padding-left: 13px; }
.q-waffle { width: 22px; height: 22px; }
.q-file { width: 21px; height: 24px; margin-left: 27px; }
.caret-file { margin-left: 9px; }
.q-save { width: 22px; height: 24px; margin-left: 28px; }
.q-undo { width: 20px; height: 24px; margin-left: 28px; }
.caret-undo { margin-left: 10px; }
.q-redo { width: 18px; height: 24px; margin-left: 20px; }
.caret-redo { margin-left: 10px; border-top-color: #999; }
.doctab {
  width: 1195px; flex: none; margin-top: 6px; background: #f0f0f0;
  border-radius: 6px 6px 0 0; display: flex; align-items: center; padding-right: 9px;
}
.doctab-title { flex: 1; display: flex; align-items: center; justify-content: center; gap: 9px; color: #555; padding-left: 5px; }
.lock { width: 19px; height: 22px; }
.doctab-name { font-size: 18px; }
.doctab-x { width: 13px; height: 13px; }
.newtab { width: 42px; margin: 6px 0 0 7px; background: #bbb; border-radius: 4px 4px 0 0; display: flex; align-items: center; justify-content: center; flex: none; }
.newtab-plus { width: 20px; height: 20px; }
.qat-right { flex: 1; display: flex; align-items: center; padding-left: 18px; }
.q-comment { width: 25px; height: 26px; margin-top: 0; }
.q-doc { width: 24px; height: 30px; margin-left: 24px; }
.doc-count { font-size: 16.500px; margin-left: 4px; color: #555; white-space: nowrap; }
.q-clock { width: 25px; height: 26px; margin-left: 36px; }
.q-bell { width: 23px; height: 30px; margin-left: 25px; }
.q-help { width: 25px; height: 30px; margin-left: 26px; }
.avatar {
  width: 37px; height: 37px; margin-left: 27px; margin-top: 0; border-radius: 50%;
  background: #f0f0f0; font-size: 16px; color: #555;
  display: flex; align-items: center; justify-content: center;
}

/* ribbon */
.ribbon { height: 122px; background: #f0f0f0; border-bottom: 2px solid #e2e2e2; display: flex; flex: none; }
.workspace {
  width: 163px; height: 92px; margin: 15px 0 0 18px; border: 2px solid #e2e2e2; border-radius: 7px;
  display: flex; align-items: center; justify-content: center; gap: 9px;
}
.workspace-name { font-size: 16px; font-weight: 700; color: #555; }
.caret-ws { border-top-color: #444; border-width: 5px 4.500px 0; }
.rib-main { margin-left: 16px; display: flex; flex-direction: column; flex: 1; }
.rib-tabs { height: 37px; display: flex; align-items: flex-start; }
.rib-tab { font-size: 16px; line-height: 34px; color: #555; white-space: nowrap; height: 37px; }
.rib-tab-solid { margin-left: 10px; width: 85px; text-align: center; color: #1f9ad9; border-bottom: 5px solid #0696d7; }
.rib-tab-surface { margin-left: 50px; font-size: 16.500px; }
.rib-tab-mesh { margin-left: 69px; }
.rib-tab-sheet { margin-left: 67px; font-size: 15.600px; }
.rib-tab-tools { margin-left: 66px; }
.rib-groups { display: flex; margin-top: 2px; }
.group { display: flex; flex-direction: column; height: 76px; border-right: 2px solid #e2e2e2; flex: none; }
.g-create { width: 394px; }
.g-modify { width: 404px; padding-left: 8px; }
.g-assemble { width: 146px; padding-left: 8px; }
.g-construct { width: 148px; }
.g-inspect { width: 119px; }
.g-insert { width: 103px; }
.g-select { width: 112px; border-right: 0; }
.g-icons { display: flex; height: 50px; flex: none; }
.g-icons-center { justify-content: center; }
.cell { width: 65px; display: flex; justify-content: center; flex: none; }
.ic { width: 48px; height: 50px; }
.ic-w { width: 50px; }
.ic-n { width: 44px; }
.nudge-2 { margin-left: -2px; }
.nudge-4 { margin-left: -4px; }
.nudge-8 { margin-left: -10px; }
.ic-ruler { width: 44px; height: 34px; margin-top: 11px; }
.ic-picture { width: 44px; height: 44px; margin-top: 2px; }
.g-label {
  margin-top: 10px; display: flex; align-items: center; justify-content: center; gap: 4px; flex: none;
  font-size: 16px; line-height: 19px; color: #555; white-space: nowrap;
}
.g-label-create { padding-right: 8px; }
.g-label-modify { padding-right: 12px; }
.g-label-assemble { padding-right: 8px; letter-spacing: .25px; }
.g-label-insert { padding-left: 5px; }
.caret-lbl { border-width: 5px 4.500px 0; border-top-color: #444; margin-top: -4px; }

/* canvas */
.canvas { height: 740px; position: relative; background: #fff; flex: none; }
.scene { position: absolute; left: 0; top: 0; }
.cube-label { font: 12.500px Roboto, sans-serif; fill: #999; }
.cube-z { font: 14px Roboto, sans-serif; fill: #9a9aff; }
.cube-x { font: 14px Roboto, sans-serif; fill: #f09a9a; }
.side { position: absolute; left: 6px; top: 8px; width: 450px; }
.panel {
  width: 450px; height: 37px; background: #f0f0f0; border: 2px solid #d4d4d4;
  display: flex; align-items: center; padding-left: 8px;
}
.panel-back { width: 15px; height: 10px; margin-left: -2px; }
.panel-title { font-size: 16px; margin-left: 15px; color: #666; }
.panel-title-comments { margin-left: 28px; }
.panel-btn { width: 14px; height: 14px; margin-left: auto; }
.panel-grip { width: 2px; height: 15px; margin: 0 3px 0 10px; background: #aaa; }
.panel-comments { position: absolute; left: 6px; top: 697px; }
.tree { list-style: none; margin: 7px 0 0; padding: 0; display: flex; flex-direction: column; gap: 6px; }
.row { height: 30px; display: flex; align-items: center; padding-left: 54px; }
.twist { width: 14px; height: 20px; }
.twist-open { width: 17px; height: 18px; margin-left: -29px; margin-right: 12px; }
.row-body {
  margin-left: 13px; height: 30px; background: #f0f0f0; display: flex; align-items: center;
  padding: 0 14px 0 4px; gap: 14px;
}
.row-body-two { padding-right: 11px; }
.row-body-root { margin-left: 0; width: 222px; padding: 0; gap: 0; }
.row-body-root > .row-icon { margin-left: 5px; }
.row-icon { width: 24px; height: 22px; }
.row-comp { height: 25px; }
.row-text { font-size: 16px; color: #555; margin-left: 7px; white-space: nowrap; }
.row-text-wide { letter-spacing: .45px; }
.root-sel { width: 147px; height: 24px; margin-left: 9px; background: #8f8f8f; display: flex; align-items: center; }
.root-comp { width: 24px; height: 24px; margin-left: 5px; }
.root-name { font-size: 17px; font-weight: 700; color: #eee; margin-left: 20px; letter-spacing: .3px; }
.root-target { width: 20px; height: 20px; margin-left: 6px; }
.unsaved {
  position: absolute; left: 765px; top: 7px; width: 390px; height: 36px; background: #f0f0f0;
  display: flex; align-items: center;
}
.warn { width: 26px; height: 28px; margin-left: 4px; }
.unsaved-key { font-size: 17px; margin-left: 8px; color: #555; letter-spacing: .4px; }
.unsaved-msg { font-size: 16px; margin-left: 31px; width: 173px; height: 36px; line-height: 36px; border-right: 2px solid #ddd; color: #555; letter-spacing: .35px; }
.unsaved-save { font-size: 17px; margin-left: 19px; color: #2b8fd0; letter-spacing: .3px; }
.navbar {
  position: absolute; left: 782px; top: 698px; width: 356px; height: 36px; background: #f0f0f0;
  display: flex; align-items: center; gap: 14px;
}
.nav-orbit { width: 49px; height: 36px; background: #0696d7; display: flex; align-items: center; padding-left: 4px; gap: 8px; margin-right: -9px; }
.nav-ic { width: 24px; height: 26px; }
.nav-hand { margin-left: 2px; }
.nav-item { display: flex; align-items: center; gap: 7px; margin-right: -6px; }
.nav-zw { margin-left: 2px; }
.nav-disp { margin-left: 1px; gap: 5px; }
.nav-grid { margin-left: 2px; gap: 4px; }
.nav-views { margin-left: 3px; gap: 4px; }
.caret-white { border-top-color: #fff; border-width: 6px 4.500px 0; }
.caret-nav { border-top-color: #333; border-width: 6px 4.500px 0; }

/* timeline */
.timeline {
  height: 75px; background: #f0f0f0; border-top: 3px solid #ccc; flex: none;
  display: flex; align-items: flex-start; position: relative;
}
.tl-controls { display: flex; gap: 18px; margin: 25px 0 0 16px; width: 201px; flex: none; }
.tl-ctl { width: 19px; height: 24px; }
.tl-track { margin-left: 0; flex: none; width: 430px; }
.tl-items { display: flex; height: 32px; margin-top: 22px; gap: 10px; }
.tl-i { width: 26px; height: 32px; }
.tl-ruler {
  display: flex; width: 397px; height: 10px; margin: 2px 0 0 11px;
  border-bottom: 3px solid #d2d2d2; border-left: 2px solid #d2d2d2;
}
.tl-ruler i { flex: 1; border-right: 2px solid #d2d2d2; }
.tl-marker { width: 18px; height: 48px; margin: 14px 0 0 -10px; }
.tl-gear { width: 24px; height: 24px; margin: 25px 19px 0 auto; fill: #8f8f8f; }
.gear-tree { fill: #8f8f8f; }

/* taskbar */
.taskbar { height: 60px; background: #2e2e22; display: flex; flex: none; align-items: stretch; color: #fff; }
.start { width: 73px; display: flex; align-items: center; justify-content: center; flex: none; }
.win { width: 24px; height: 24px; }
.search { width: 514px; background: #f0f0f0; border: 2px solid #bdbdbd; border-bottom: 0; display: flex; align-items: center; flex: none; }
.search-ic { width: 26px; height: 28px; margin-left: 15px; }
.search-text { font: 21.500px "Open Sans", sans-serif; color: #222; margin-left: 15px; white-space: nowrap; }
.tb-cell { width: 75px; display: flex; align-items: center; justify-content: center; flex: none; }
.tb-open { box-shadow: inset 6px 0 0 0 #2e2e22, inset -7px 0 0 0 #2e2e22, inset 0 -3px 0 0 #6fb4e8; }
.tb-active { background: #55554a; width: 73px; box-shadow: inset 0 -3px 0 0 #6fb4e8; }
.tb-cortana { width: 24px; height: 24px; }
.tb-view { width: 22px; height: 24px; margin-left: -10px; }
.tb-gear { width: 28px; height: 28px; fill: #fff; margin-left: -4px; }
.tb-app { width: 32px; height: 28px; margin-left: -3px; }
.tb-rar { width: 36px; height: 36px; background: #42a0f0; position: relative; display: flex; justify-content: center; margin-left: -4px; }
.tb-rar-card { width: 25px; height: 31px; margin-top: 3px; }
.tb-rar-text { position: absolute; left: 0; right: 0; bottom: 3px; text-align: center; font-size: 11px; font-weight: 700; color: #5aaaf2; }
.tb-chrome { width: 40px; height: 38px; position: relative; }
.tb-chrome-ic { width: 34px; height: 34px; }
.tb-badge {
  position: absolute; right: -1px; bottom: -2px; width: 24px; height: 24px; border-radius: 50%;
  background: #c2185b; color: #f5b7cf; font-size: 13px; font-weight: 700;
  display: flex; align-items: center; justify-content: center;
}
.tb-fusion { width: 36px; height: 36px; background: linear-gradient(135deg, #fbe2c6, #fff); position: relative; display: flex; justify-content: center; padding-top: 3px; }
.tb-fusion-ic { width: 22px; height: 30px; }
.tb-fusion-num { position: absolute; right: 2px; bottom: 1px; font-size: 7px; font-weight: 700; color: #f09a3a; }
.tray { margin-left: auto; display: flex; align-items: center; padding-right: 37px; }
.sun { width: 28px; height: 28px; border-radius: 50%; background: linear-gradient(135deg, #ffe27a, #f59a0b); }
.weather { font: 20px "Open Sans", sans-serif; margin-left: 15px; color: #f2f2f2; white-space: nowrap; }
.tray-up { width: 19px; height: 11px; margin-left: 26px; }
.tray-batt { width: 24px; height: 18px; margin-left: 15px; }
.tray-vol { width: 21px; height: 18px; margin-left: 13px; }
.tray-wifi { width: 18px; height: 18px; margin-left: 18px; }
.clock { width: 94px; margin-left: 18px; display: flex; flex-direction: column; align-items: center; gap: 4px; font: 17px/24px "Open Sans", sans-serif; color: #eee; white-space: nowrap; }
.tray-note { width: 24px; height: 24px; margin-left: 30px; }
```
